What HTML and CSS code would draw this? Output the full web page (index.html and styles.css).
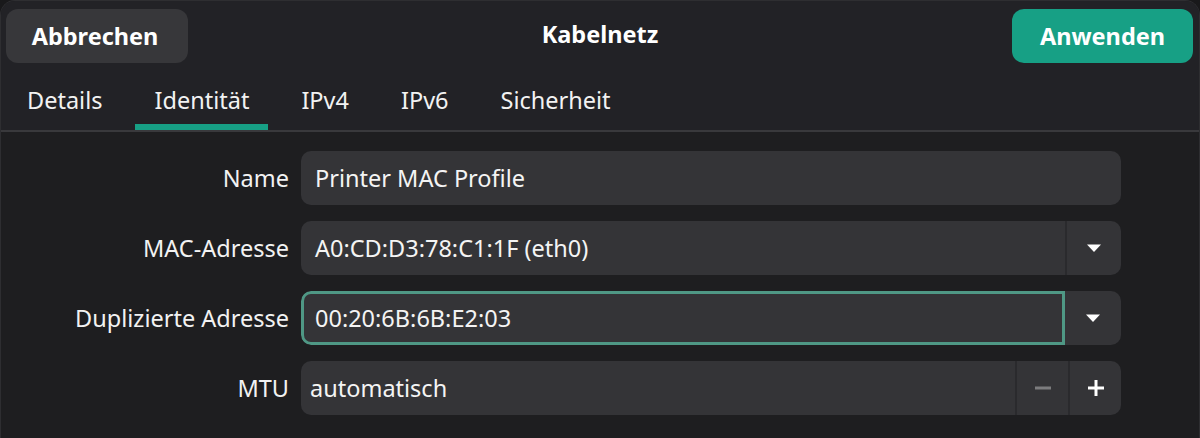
FILE: index.html
```html
<!DOCTYPE html>
<html lang="de">
<head>
<meta charset="utf-8">
<title>Kabelnetz</title>
<link rel="stylesheet" href="styles.css">
</head>
<body>
<div class="window">
  <header class="header">
    <div class="headerbar">
      <button class="btn btn-cancel">Abbrechen</button>
      <div class="title">Kabelnetz</div>
      <button class="btn btn-apply">Anwenden</button>
    </div>
    <nav class="tabs">
      <div class="tab">Details</div>
      <div class="tab active">Identität</div>
      <div class="tab">IPv4</div>
      <div class="tab">IPv6</div>
      <div class="tab">Sicherheit</div>
    </nav>
  </header>
  <main class="form">
    <label class="label">Name</label>
    <div class="field"><span class="entry">Printer MAC Profile</span></div>

    <label class="label">MAC-Adresse</label>
    <div class="field combo">
      <span class="entry">A0:CD:D3:78:C1:1F (eth0)</span>
      <span class="side-btn arrow-btn"><svg width="16" height="10" viewBox="0 0 16 10"><path d="M1 1.5h14L8 9z" fill="#fff"/></svg></span>
    </div>

    <label class="label">Duplizierte Adresse</label>
    <div class="field combo">
      <span class="entry focused">00:20:6B:6B:E2:03</span>
      <span class="side-btn arrow-btn"><svg width="16" height="10" viewBox="0 0 16 10"><path d="M1 1.5h14L8 9z" fill="#fff"/></svg></span>
    </div>

    <label class="label">MTU</label>
    <div class="field spin">
      <span class="entry spin-entry">automatisch</span>
      <span class="side-btn spin-btn"><svg width="18" height="18" viewBox="0 0 18 18"><path d="M1 9h16" stroke="#7c7c7e" stroke-width="3"/></svg></span>
      <span class="side-btn spin-btn"><svg width="18" height="18" viewBox="0 0 18 18"><path d="M1 9h16M9 1v16" stroke="#fff" stroke-width="3"/></svg></span>
    </div>
  </main>
</div>
</body>
</html>
```

FILE: styles.css
```css
* { box-sizing: border-box; }
html, body {
  margin: 0;
  height: 100%;
  background: #19191b;
}
body {
  font-family: "Noto Sans", "Open Sans", sans-serif;
  color: #ffffff;
  overflow: hidden;
}
.window {
  height: 438px;
  background: #1e1e20;
  border-radius: 15px 15px 0 0;
  border: 1px solid #2e2e31;
  border-bottom: none;
  overflow: hidden;
}
.header {
  background: #222226;
  border-bottom: 2px solid #39393c;
}
.headerbar {
  display: flex;
  align-items: center;
  justify-content: space-between;
  padding: 7px 6px 0 5px;
  height: 62px;
  position: relative;
}
.btn {
  font-family: inherit;
  font-size: 23.5px;
  font-weight: 700;
  color: #fff;
  border: none;
  height: 54px;
  border-radius: 12px;
  padding: 0;
}
.btn-cancel { background: #37373a; width: 182px; padding-right: 4px; }
.btn-apply { background: #17a085; width: 181px; }
.title {
  font-size: 23.5px;
  font-weight: 700;
  position: absolute;
  left: 0;
  right: 0;
  top: 6px;
  height: 54px;
  line-height: 54px;
  text-align: center;
  pointer-events: none;
}
.tabs {
  display: flex;
  gap: 14px;
  padding: 11px 0 0 7px;
  height: 67px;
}
.tab {
  font-size: 23.5px;
  padding: 0 19px;
  line-height: 52px;
  height: 56px;
  color: #f2f2f2;
  border-bottom: 6px solid transparent;
}
.tab.active {
  border-bottom-color: #17a085;
}
.form {
  display: grid;
  grid-template-columns: 224px 1fr;
  column-gap: 12px;
  row-gap: 16px;
  padding: 19px 78px 0 64px;
  grid-auto-rows: 54px;
}
.label {
  font-size: 23.5px;
  text-align: right;
  align-self: center;
  color: #f2f2f2;
  white-space: nowrap;
}
.field {
  display: flex;
  background: #343437;
  border-radius: 10px;
  height: 54px;
  overflow: hidden;
}
.entry {
  flex: 1;
  font-size: 23.5px;
  display: flex;
  align-items: center;
  padding: 0 14px;
  color: #f4f4f4;
}
.entry.focused {
  border: 3px solid #4f9885;
  border-radius: 10px 0 0 10px;
  padding-left: 11px;
}
.spin-entry { padding-left: 9px; }
.side-btn {
  display: flex;
  align-items: center;
  justify-content: center;
  border-left: 2px solid #2a2a2d;
}
.arrow-btn { width: 56px; }
.combo .entry.focused + .arrow-btn { border-left: none; }
.spin-btn { width: 53px; }
```
